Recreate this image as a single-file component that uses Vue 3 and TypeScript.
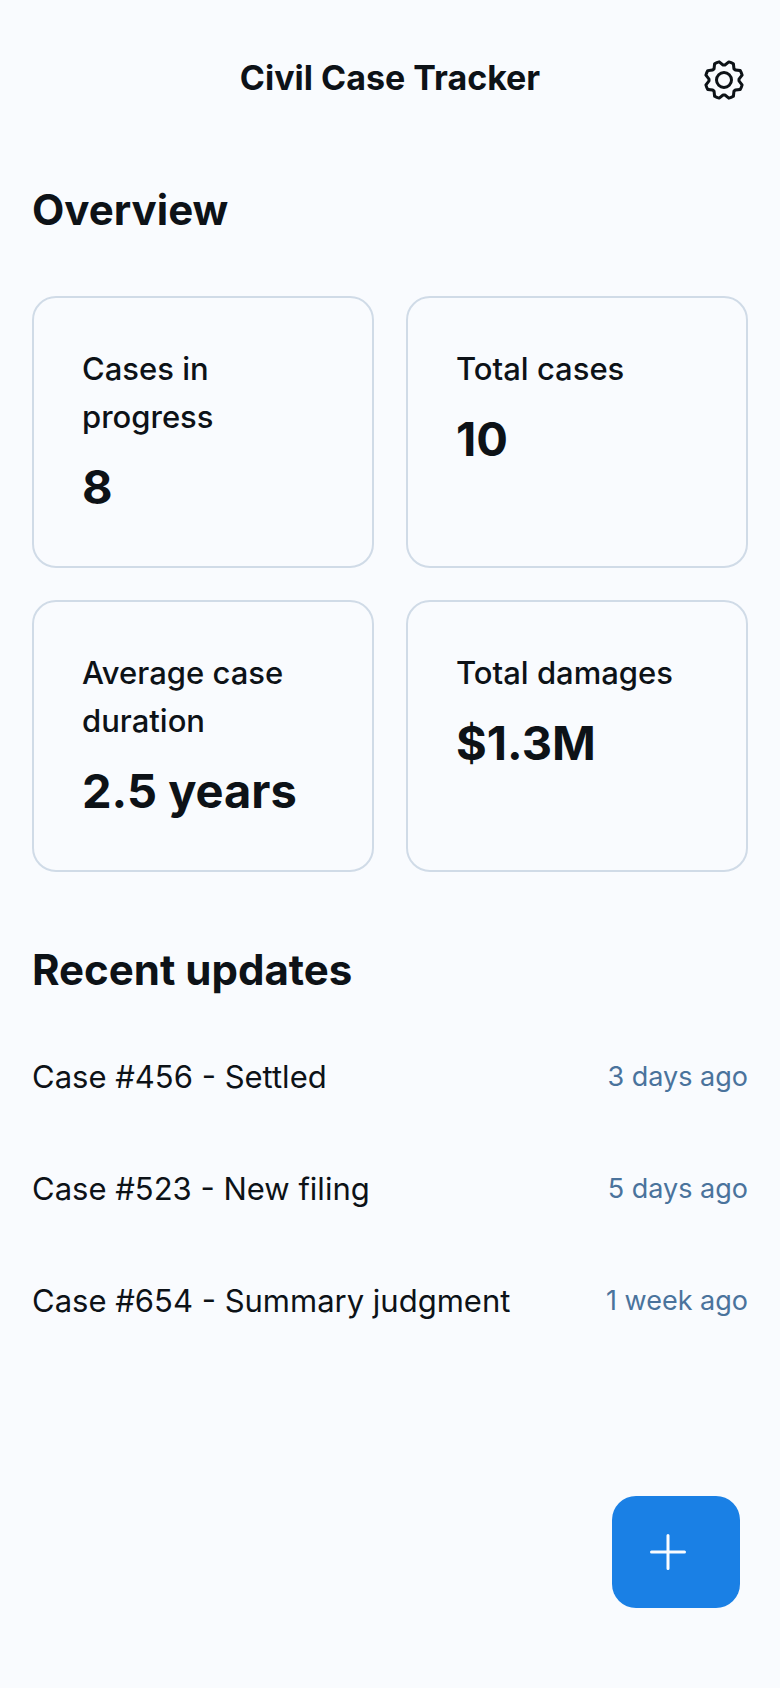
<script setup lang="ts">
interface Stat {
  label: string
  value: string
}

interface Update {
  title: string
  time: string
}

const stats: Stat[] = [
  { label: 'Cases in progress', value: '8' },
  { label: 'Total cases', value: '10' },
  { label: 'Average case duration', value: '2.5 years' },
  { label: 'Total damages', value: '$1.3M' },
]

const updates: Update[] = [
  { title: 'Case #456 - Settled', time: '3 days ago' },
  { title: 'Case #523 - New filing', time: '5 days ago' },
  { title: 'Case #654 - Summary judgment', time: '1 week ago' },
]
</script>

<template>
  <div class="page">
    <header class="header">
      <h1 class="title">Civil Case Tracker</h1>
      <button class="settings" type="button" aria-label="Settings">
        <svg viewBox="0 0 256 256" width="48" height="48" fill="currentColor" aria-hidden="true">
          <path
            d="M128,80a48,48,0,1,0,48,48A48.05,48.05,0,0,0,128,80Zm0,80a32,32,0,1,1,32-32A32,32,0,0,1,128,160Zm88-29.84q.06-2.16,0-4.32l14.92-18.64a8,8,0,0,0,1.48-7.06,107.21,107.21,0,0,0-10.88-26.25,8,8,0,0,0-6-3.93l-23.72-2.64q-1.48-1.56-3-3L186,40.54a8,8,0,0,0-3.94-6,107.71,107.71,0,0,0-26.25-10.87,8,8,0,0,0-7.06,1.49L130.16,40Q128,40,125.84,40L107.2,25.11a8,8,0,0,0-7.06-1.48A107.6,107.6,0,0,0,73.89,34.51a8,8,0,0,0-3.93,6L67.32,64.27q-1.56,1.49-3,3L40.54,70a8,8,0,0,0-6,3.94,107.71,107.71,0,0,0-10.87,26.25,8,8,0,0,0,1.49,7.06L40,125.84Q40,128,40,130.16L25.11,148.8a8,8,0,0,0-1.48,7.06,107.21,107.21,0,0,0,10.88,26.25,8,8,0,0,0,6,3.93l23.72,2.64q1.49,1.56,3,3L70,215.46a8,8,0,0,0,3.94,6,107.71,107.71,0,0,0,26.25,10.87,8,8,0,0,0,7.06-1.49L125.84,216q2.16.06,4.32,0l18.64,14.92a8,8,0,0,0,7.06,1.48,107.21,107.21,0,0,0,26.25-10.88,8,8,0,0,0,3.93-6l2.64-23.72q1.56-1.48,3-3L215.46,186a8,8,0,0,0,6-3.94,107.71,107.71,0,0,0,10.87-26.25,8,8,0,0,0-1.49-7.06Zm-16.1-6.5a73.93,73.93,0,0,1,0,8.68,8,8,0,0,0,1.74,5.48l14.19,17.73a91.57,91.57,0,0,1-6.23,15L187,173.11a8,8,0,0,0-5.1,2.64,74.11,74.11,0,0,1-6.14,6.14,8,8,0,0,0-2.64,5.1l-2.51,22.58a91.32,91.32,0,0,1-15,6.23l-17.74-14.19a8,8,0,0,0-5-1.75h-.48a73.93,73.93,0,0,1-8.68,0,8,8,0,0,0-5.48,1.74L100.45,215.8a91.57,91.57,0,0,1-15-6.23L82.89,187a8,8,0,0,0-2.64-5.1,74.11,74.11,0,0,1-6.14-6.14,8,8,0,0,0-5.1-2.64L46.43,170.6a91.32,91.32,0,0,1-6.23-15l14.19-17.74a8,8,0,0,0,1.74-5.48,73.93,73.93,0,0,1,0-8.68,8,8,0,0,0-1.74-5.48L40.2,100.45a91.57,91.57,0,0,1,6.23-15L69,82.89a8,8,0,0,0,5.1-2.64,74.11,74.11,0,0,1,6.14-6.14A8,8,0,0,0,82.89,69L85.4,46.43a91.32,91.32,0,0,1,15-6.23l17.74,14.19a8,8,0,0,0,5.48,1.74,73.93,73.93,0,0,1,8.68,0,8,8,0,0,0,5.48-1.74L155.55,40.2a91.57,91.57,0,0,1,15,6.23L173.11,69a8,8,0,0,0,2.64,5.1,74.11,74.11,0,0,1,6.14,6.14,8,8,0,0,0,5.1,2.64l22.58,2.51a91.32,91.32,0,0,1,6.23,15l-14.19,17.74A8,8,0,0,0,199.87,123.66Z"
          />
        </svg>
      </button>
    </header>

    <main class="content">
      <section>
        <h2 class="heading">Overview</h2>
        <dl class="stats">
          <div v-for="stat in stats" :key="stat.label" class="card">
            <dt class="label">{{ stat.label }}</dt>
            <dd class="value">{{ stat.value }}</dd>
          </div>
        </dl>
      </section>

      <section>
        <h2 class="heading">Recent updates</h2>
        <ul class="updates">
          <li v-for="update in updates" :key="update.title" class="update">
            <span class="name">{{ update.title }}</span>
            <span class="time">{{ update.time }}</span>
          </li>
        </ul>
      </section>
    </main>

    <footer class="footer">
      <button class="add" type="button" aria-label="Add case">
        <svg viewBox="0 0 48 48" width="48" height="48" fill="none" stroke="currentColor" stroke-width="3" stroke-linecap="round" aria-hidden="true">
          <path d="M7.5 24h33M24 7.5v33" />
        </svg>
      </button>
    </footer>
  </div>
</template>

<style>
body {
  background: #f9fbfe;
}
</style>

<style scoped>
.page {
  display: flex;
  flex-direction: column;
  box-sizing: border-box;
  min-height: 100vh;
  background: #f9fbfe;
  color: #0d1217;
  font-family: Inter, "Liberation Sans", sans-serif;
}

.header {
  display: grid;
  grid-template-columns: 96px 1fr 96px;
  align-items: center;
  padding: 32px 32px 16px;
}

.title {
  grid-column: 2;
  margin: 0 0 4px;
  font-size: 34px;
  line-height: 44px;
  font-weight: 700;
  text-align: center;
}

.settings {
  display: flex;
  align-items: center;
  justify-content: flex-end;
  height: 96px;
  padding: 0;
  border: 0;
  background: transparent;
  color: inherit;
  cursor: pointer;
}

.content {
  flex: 1;
}

.heading {
  margin: 0;
  padding: 39px 32px 24px;
  font-size: 42px;
  line-height: 54px;
  font-weight: 700;
}

.stats {
  display: grid;
  grid-template-columns: repeat(2, minmax(0, 1fr));
  gap: 32px;
  margin: 0;
  padding: 35px 32px 32px;
}

.card {
  display: flex;
  flex-direction: column;
  gap: 16px;
  padding: 47px 48px 49px;
  border: 2px solid #d0dbe7;
  border-radius: 24px;
}

.label {
  font-size: 31px;
  line-height: 48px;
  font-weight: 500;
}

.value {
  margin: 0;
  font-size: 47px;
  line-height: 60px;
  font-weight: 700;
}

.updates {
  margin: 0;
  padding: 0;
  list-style: none;
}

.update {
  display: flex;
  align-items: center;
  justify-content: space-between;
  gap: 32px;
  min-height: 112px;
  padding: 0 32px;
}

.name {
  font-size: 31px;
  line-height: 48px;
}

.time {
  color: #4a739c;
  font-size: 27px;
  line-height: 42px;
  white-space: nowrap;
}

.footer {
  display: flex;
  justify-content: flex-end;
  padding: 0 40px 80px;
}

.add {
  display: flex;
  align-items: center;
  width: 128px;
  height: 112px;
  padding: 0 32px;
  border: 0;
  border-radius: 24px;
  background: #1a80e5;
  color: #fafcff;
  cursor: pointer;
}
</style>
